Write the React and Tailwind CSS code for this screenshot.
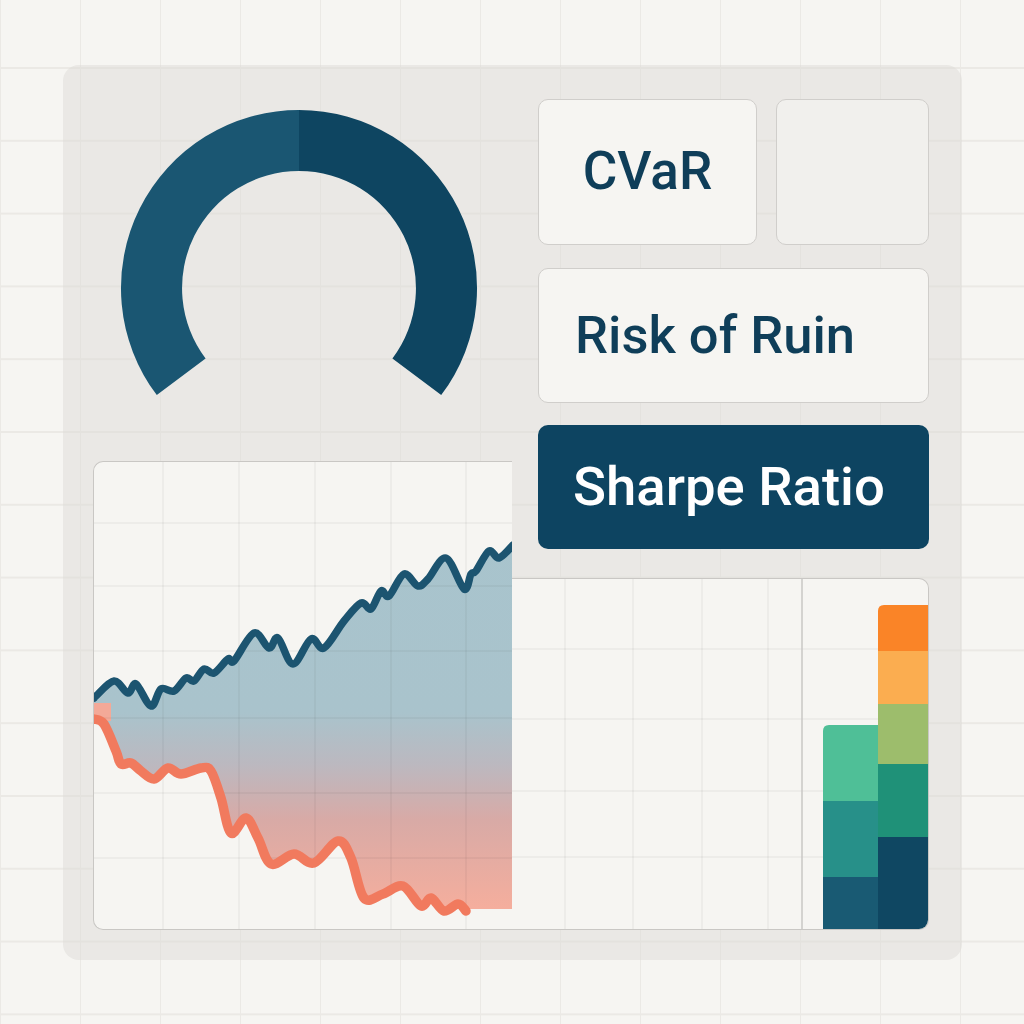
import React from 'react'

const BLUE_PTS = [
  [0, 236], [2, 234], [20, 219], [34, 231], [42, 222], [57, 244], [67, 227], [80, 229], [92, 216],
  [100, 219], [110, 207], [120, 211], [134, 197], [140, 199], [160, 171], [175, 186], [184, 176],
  [199, 202], [217, 177], [230, 186], [250, 159], [267, 141], [277, 147], [287, 129], [295, 134],
  [310, 112], [324, 124], [334, 117], [352, 96], [370, 127], [377, 112], [382, 109], [395, 89],
  [405, 96], [419, 83],
]

const RED_PTS = [
  [0, 257], [10, 262], [22, 289], [27, 302], [37, 301], [47, 309], [60, 317], [74, 306], [87, 312],
  [107, 306], [117, 309], [127, 336], [137, 371], [152, 356], [164, 376], [177, 402], [200, 392],
  [220, 401], [244, 379], [257, 396], [270, 436], [289, 432], [309, 424], [327, 444], [337, 436],
  [350, 449], [364, 442], [372, 449],
]

// catmull-rom -> cubic bezier segments
function segs(pts) {
  let d = ''
  for (let i = 0; i < pts.length - 1; i++) {
    const p0 = pts[i - 1] || pts[i]
    const p1 = pts[i]
    const p2 = pts[i + 1]
    const p3 = pts[i + 2] || p2
    const c1x = p1[0] + (p2[0] - p0[0]) / 6
    const c1y = p1[1] + (p2[1] - p0[1]) / 6
    const c2x = p2[0] - (p3[0] - p1[0]) / 6
    const c2y = p2[1] - (p3[1] - p1[1]) / 6
    d += ` C${c1x.toFixed(1)} ${c1y.toFixed(1)} ${c2x.toFixed(1)} ${c2y.toFixed(1)} ${p2[0]} ${p2[1]}`
  }
  return d
}

const line = (pts) => `M${pts[0][0]} ${pts[0][1]}` + segs(pts)

function Gauge() {
  return (
    <svg width="419" height="396" viewBox="0 0 419 396">
      <path d="M63.8 330.1 A178 178 0 0 1 206 45 L206 106 A117 117 0 0 0 112.6 293.4 Z" fill="#1a5672" />
      <path d="M206 45 A178 178 0 0 1 348.2 330.1 L299.4 293.4 A117 117 0 0 0 206 106 Z" fill="#0e4561" />
    </svg>
  )
}

function AreaChart() {
  const revRed = [...RED_PTS].reverse()
  const area =
    line(BLUE_PTS) + ` L419 447 L372 447 L${revRed[0][0]} ${revRed[0][1]}` + segs(revRed) + ' Z'
  return (
    <svg width="419" height="467" viewBox="0 0 419 467" className="block">
      <defs>
        <linearGradient id="fillGrad" x1="0" y1="0" x2="0" y2="447" gradientUnits="userSpaceOnUse">
          <stop offset="0" stopColor="#a8c4cd" />
          <stop offset="0.56" stopColor="#a9c3cc" />
          <stop offset="0.68" stopColor="#bcb8bf" />
          <stop offset="0.8" stopColor="#d8aaa6" />
          <stop offset="1" stopColor="#f5ae9d" />
        </linearGradient>
      </defs>
      <path d={area} fill="url(#fillGrad)" />
      <rect x="0" y="241" width="17" height="18" fill="#f3a998" />
      {[69, 145, 221, 297, 372].map((x) => (
        <line key={x} x1={x} y1="0" x2={x} y2="467" stroke="#000" strokeOpacity="0.05" strokeWidth="1.5" />
      ))}
      {[61, 124, 189, 256, 331, 396].map((y) => (
        <line key={y} x1="0" y1={y} x2="419" y2={y} stroke="#000" strokeOpacity="0.05" strokeWidth="1.5" />
      ))}
      <path d={line(RED_PTS)} fill="none" stroke="#f17a5e" strokeWidth="9.5" strokeLinecap="round" strokeLinejoin="round" />
      <path d={line(BLUE_PTS)} fill="none" stroke="#1c5470" strokeWidth="7.5" strokeLinecap="round" strokeLinejoin="round" />
    </svg>
  )
}

function BarsChart() {
  const left = [
    { y: 146, h: 76, c: '#4fbf97' },
    { y: 222, h: 76, c: '#279089' },
    { y: 298, h: 53, c: '#195a73' },
  ]
  const right = [
    { y: 26, h: 46, c: '#fa8427' },
    { y: 72, h: 53, c: '#fbad50' },
    { y: 125, h: 60, c: '#9dbd6c' },
    { y: 185, h: 73, c: '#1f9178' },
    { y: 258, h: 93, c: '#0f4762' },
  ]
  return (
    <svg width="416" height="351" viewBox="0 0 416 351" className="block">
      <defs>
        <clipPath id="lbar">
          <path d="M311 351 V152 Q311 146 317 146 H366 V351 Z" />
        </clipPath>
        <clipPath id="rbar">
          <path d="M366 351 V32 Q366 26 372 26 H416 V341 Q416 351 406 351 Z" />
        </clipPath>
      </defs>
      {[53, 121, 190, 256].map((x) => (
        <line key={x} x1={x} y1="0" x2={x} y2="351" stroke="#000" strokeOpacity="0.05" strokeWidth="1.5" />
      ))}
      {[70, 140, 212, 278].map((y) => (
        <line key={y} x1="0" y1={y} x2="416" y2={y} stroke="#000" strokeOpacity="0.05" strokeWidth="1.5" />
      ))}
      <line x1="290" y1="0" x2="290" y2="351" stroke="#c9c7c4" strokeWidth="1.5" />
      <g clipPath="url(#lbar)">
        {left.map((s) => (
          <rect key={s.y} x="311" y={s.y} width="55" height={s.h} fill={s.c} />
        ))}
      </g>
      <g clipPath="url(#rbar)">
        {right.map((s) => (
          <rect key={s.y} x="366" y={s.y} width="50" height={s.h} fill={s.c} />
        ))}
      </g>
    </svg>
  )
}

export default function App() {
  return (
    <div
      className="h-[1024px] w-[1024px] overflow-hidden bg-[#f6f5f2] bg-[linear-gradient(to_right,#ebe9e5_1.5px,transparent_1.5px),linear-gradient(to_bottom,#ebe9e5_1.5px,transparent_1.5px)] bg-[size:80px_72.8px] bg-[position:0px_67px] pl-[63px] pt-[65px]"
      style={{ fontFamily: 'Roboto, "Liberation Sans", sans-serif' }}
    >
      <div className="flex h-[895px] w-[899px] rounded-[16px] bg-[#dddbd7]/50 pb-[30px] pl-[30px] pr-[33px]">
        <div className="flex w-[419px] flex-col">
          <div className="h-[396px]">
            <Gauge />
          </div>
          <div className="h-[469px] overflow-hidden rounded-l-[10px] border border-r-0 border-[#c9c7c4] bg-[#f6f5f2]">
            <AreaChart />
          </div>
        </div>

        <div className="flex flex-1 flex-col pt-[34px]">
          <div className="flex h-[146px] gap-[19px] pl-[26px]">
            <div className="flex w-[219px] items-center justify-center rounded-[10px] border-[1.5px] border-[#d0cecb] bg-[#f6f5f2] text-[53px] font-medium text-[#0f3e59]">
              CVaR
            </div>
            <div className="flex-1 rounded-[10px] border-[1.5px] border-[#d0cecb] bg-[#f1f0ed]" />
          </div>
          <div className="ml-[26px] mt-[23px] flex h-[135px] items-center rounded-[10px] border-[1.5px] border-[#d0cecb] bg-[#f6f5f2] pl-[36px] text-[52.5px] font-medium text-[#0f3e59]">
            Risk of Ruin
          </div>
          <div className="ml-[26px] mt-[22px] flex h-[124px] items-center rounded-[10px] bg-[#0d4461] pl-[35px] text-[54.5px] font-medium text-white">
            Sharpe Ratio
          </div>
          <div className="mt-[29px] flex-1 overflow-hidden rounded-r-[10px] border border-l-0 border-[#c9c7c4] bg-[#f6f5f2]">
            <BarsChart />
          </div>
        </div>
      </div>
    </div>
  )
}
